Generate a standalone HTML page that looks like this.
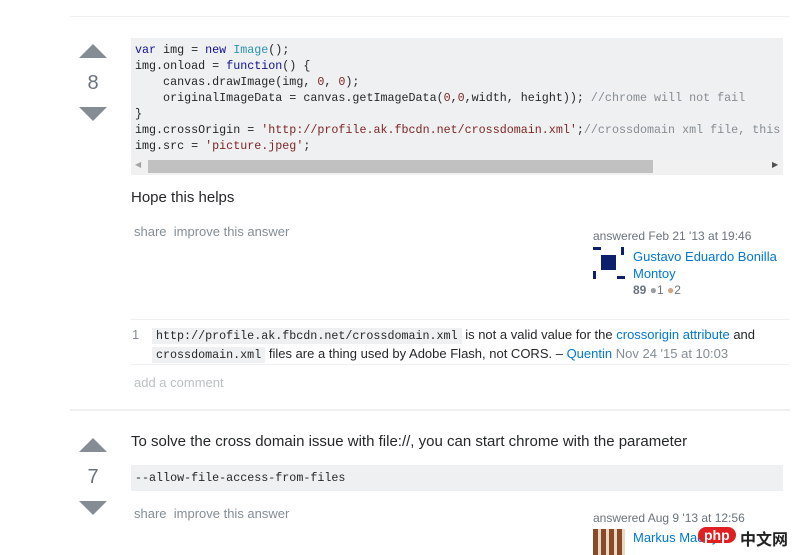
<!DOCTYPE html>
<html><head><style>
body{margin:0;width:800px;height:555px;overflow:hidden;background:#fff;font-family:"Liberation Sans",Arial,sans-serif;position:relative}
.a{position:absolute}
.mono{font-family:"Liberation Mono",monospace;font-size:11.7px}
.up{width:0;height:0;border-left:14px solid transparent;border-right:14px solid transparent;border-bottom:14px solid #858c93}
.dn{width:0;height:0;border-left:14px solid transparent;border-right:14px solid transparent;border-top:14px solid #858c93}
.num{font-size:20px;color:#6a737c;width:28px;text-align:center}
.hr{height:2px;background:#eff0f1}
.kw{color:#101094}.ty{color:#2b91af}.st{color:#7d2727}.cm{color:#858c93}
.pre{white-space:pre;line-height:16px;color:#242729}
.lnk{color:#0077cc}.g{color:#848d95}
code{font-family:"Liberation Mono",monospace;font-size:11.7px;background:#eff0f1;padding:1px 4px}
</style></head><body>
<div class="a hr" style="left:70px;top:16px;width:720px;height:1px"></div>
<div class="a up" style="left:79px;top:44px"></div>
<div class="a num" style="left:79px;top:72px">8</div>
<div class="a dn" style="left:79px;top:107px"></div>
<div class="a" style="left:131px;top:38px;width:652px;height:137px;background:#eff0f1"></div>
<div class="a mono pre" style="left:135px;top:42px;width:648px;overflow:hidden"><span class="kw">var</span> img = <span class="kw">new</span> <span class="ty">Image</span>();
img.onload = <span class="kw">function</span>() {
    canvas.drawImage(img, <span class="st">0</span>, <span class="st">0</span>);
    originalImageData = canvas.getImageData(<span class="st">0</span>,<span class="st">0</span>,width, height)); <span class="cm">//chrome will not fail</span>
}
img.crossOrigin = <span class="st">'http://profile.ak.fbcdn.net/crossdomain.xml'</span>;<span class="cm">//crossdomain xml file, this</span>
img.src = <span class="st">'picture.jpeg'</span>;</div>
<div class="a" style="left:131px;top:159px;width:652px;height:15px;background:#f1f1f1"></div>
<div class="a" style="left:148px;top:160px;width:505px;height:13px;background:#c1c1c1"></div>
<div class="a" style="left:135px;top:160px;font-size:8px;color:#a3a3a3">◀</div>
<div class="a" style="left:772px;top:160px;font-size:8px;color:#505050">▶</div>
<div class="a" style="left:131px;top:189px;font-size:15px;color:#242729">Hope this helps</div>
<div class="a g" style="left:134px;top:224px;font-size:13px">share&nbsp;&nbsp;improve this answer</div>
<div class="a g" style="left:593px;top:229px;font-size:12px;color:#6a737c">answered Feb 21 '13 at 19:46</div>
<svg class="a" style="left:593px;top:247px" width="32" height="32"><rect x="0" y="0" width="8" height="3" fill="#0b1f6e"/><rect x="28" y="0" width="3" height="8" fill="#0b1f6e"/><rect x="8" y="8" width="15" height="15" fill="#0b1f6e"/><rect x="0" y="24" width="3" height="8" fill="#0b1f6e"/><rect x="24" y="29" width="8" height="3" fill="#0b1f6e"/></svg>
<div class="a lnk" style="left:633px;top:248px;font-size:13px;line-height:17px;width:160px">Gustavo Eduardo Bonilla Montoy</div>
<div class="a" style="left:633px;top:283px;font-size:12px;color:#6a737c"><b style="font-weight:bold">89</b> <span style="color:#9a9fa4">●</span>1 <span style="color:#d1a684">●</span>2</div>
<div class="a hr" style="left:130px;top:319px;width:660px;height:1px"></div>
<div class="a" style="left:132px;top:327px;font-size:13px;color:#848d95">1</div>
<div class="a" style="left:152px;top:326px;font-size:13px;line-height:18px;color:#242729;width:630px"><code>http://profile.ak.fbcdn.net/crossdomain.xml</code> is not a valid value for the <span class="lnk">crossorigin attribute</span> and <code>crossdomain.xml</code> files are a thing used by Adobe Flash, not CORS. – <span class="lnk">Quentin</span> <span class="g">Nov 24 '15 at 10:03</span></div>
<div class="a hr" style="left:130px;top:364px;width:660px;height:1px"></div>
<div class="a" style="left:134px;top:375px;font-size:13px;color:#bbc0c4">add a comment</div>
<div class="a hr" style="left:70px;top:409px;width:720px"></div>
<div class="a up" style="left:79px;top:438px"></div>
<div class="a num" style="left:79px;top:466px">7</div>
<div class="a dn" style="left:79px;top:501px"></div>
<div class="a" style="left:131px;top:433px;font-size:15px;color:#242729">To solve the cross domain issue with file://, you can start chrome with the parameter</div>
<div class="a" style="left:131px;top:465px;width:652px;height:26px;background:#eff0f1"></div>
<div class="a mono" style="left:135px;top:471px;color:#242729">--allow-file-access-from-files</div>
<div class="a g" style="left:134px;top:506px;font-size:13px">share&nbsp;&nbsp;improve this answer</div>
<div class="a" style="left:593px;top:511px;font-size:12px;color:#6a737c">answered Aug 9 '13 at 12:56</div>
<div class="a" style="left:593px;top:529px;width:32px;height:26px;background:repeating-linear-gradient(90deg,#8a4a25 0 5px,#e8d8c8 5px 8px)"></div>
<div class="a lnk" style="left:633px;top:530px;font-size:13px">Markus Madey</div>
<div class="a" style="left:698px;top:527px;font-size:14px;font-weight:bold;color:#fff;background:#e02020;border-radius:10px;padding:0 6px">php</div>
<div class="a" style="left:740px;top:526px;font-size:16px;font-weight:bold;color:#222;font-family:'Noto Sans CJK SC',sans-serif">中文网</div>
</body></html>
